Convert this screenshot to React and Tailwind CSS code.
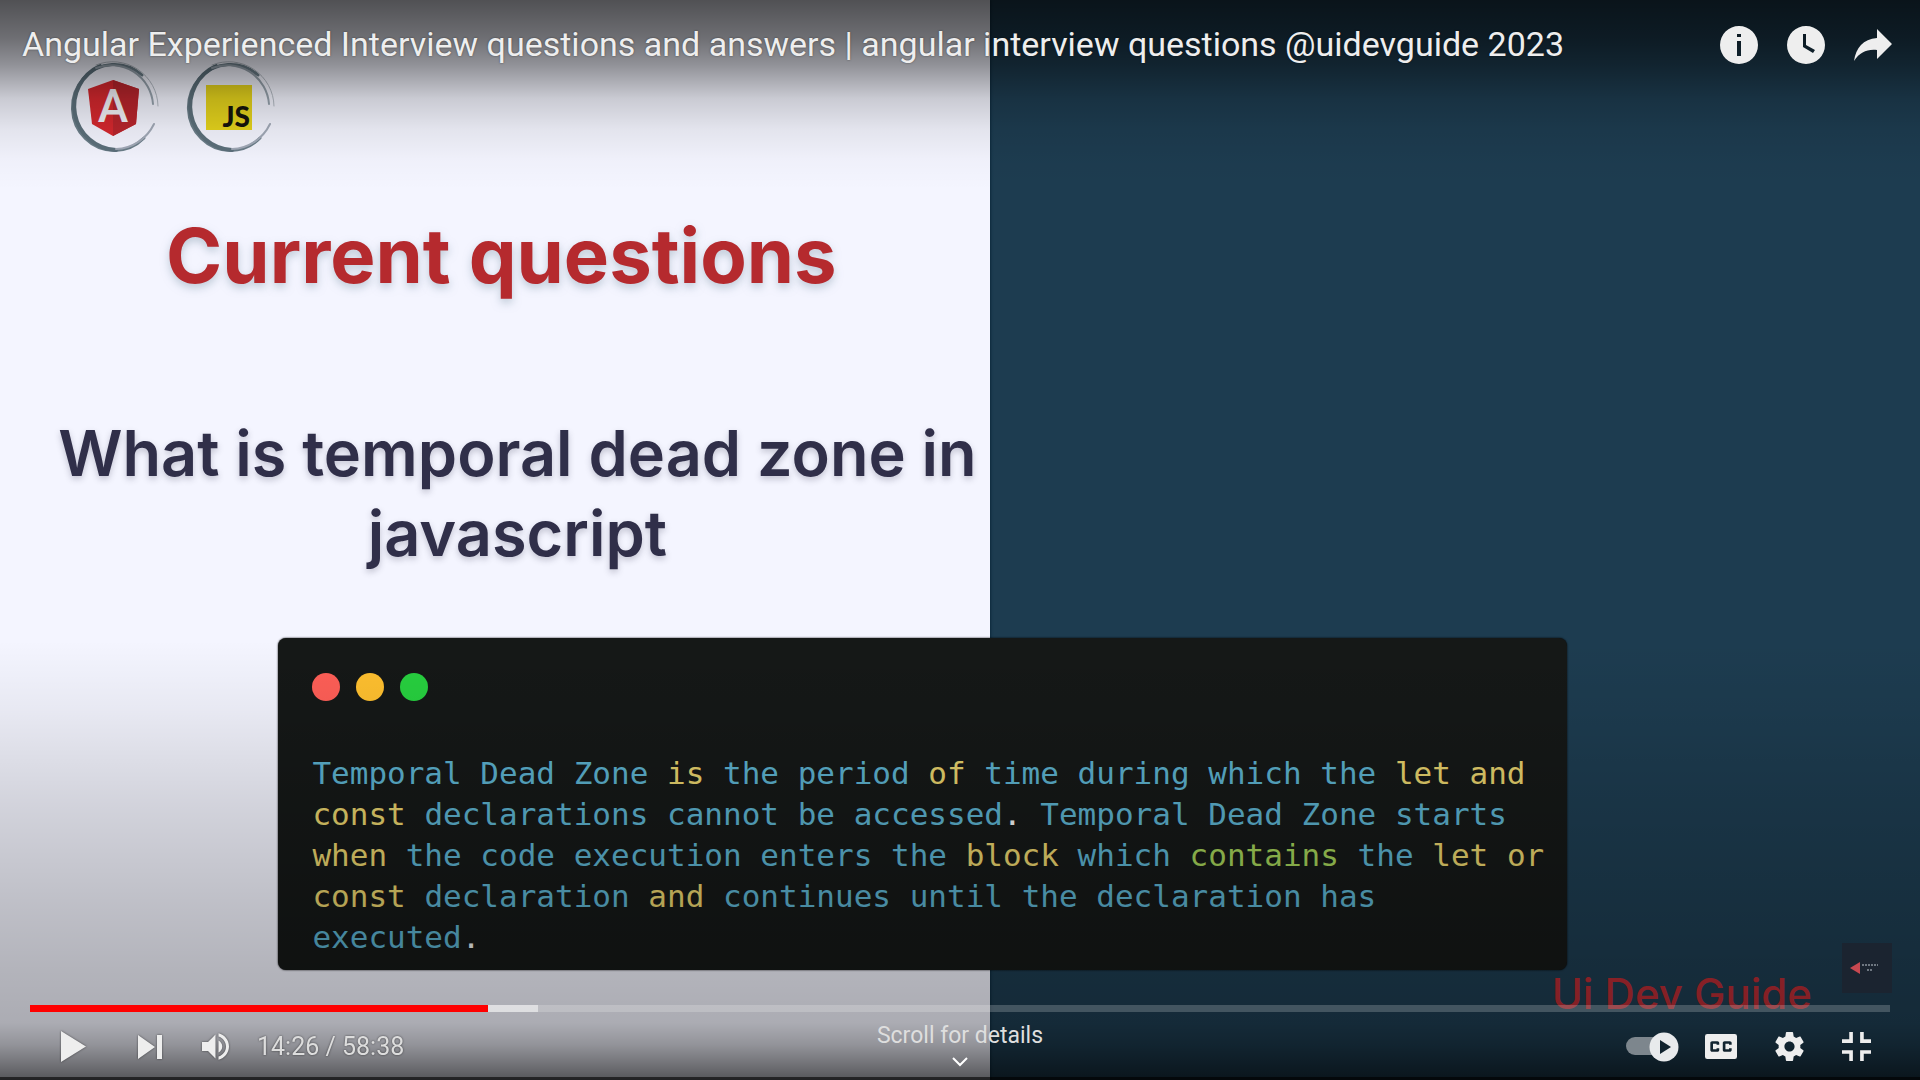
const Play = () => (<svg viewBox="0 0 25 31" className="h-[31px] w-[25px]" fill="currentColor"><path d="M0 0 25 15.500 0 31z" /></svg>);
const Next = () => (<svg viewBox="0 0 24 24" className="size-6" fill="currentColor"><path d="M0 0 17 12 0 24zM19 0h5v24h-5z" /></svg>);
const Volume = () => (<svg viewBox="8 9 18 18" className="size-[27px]" fill="currentColor"><path d="M8,21 L12,21 L17,26 L17,10 L12,15 L8,15 L8,21 Z M19,14 L19,22 C20.48,21.32 21.5,19.77 21.5,18 C21.5,16.26 20.48,14.74 19,14 Z M19,11.29 C21.89,12.15 24,14.83 24,18 C24,21.17 21.89,23.85 19,24.71 L19,26.77 C23.01,25.86 26,22.28 26,18 C26,13.72 23.01,10.14 19,9.23 L19,11.29 Z" /></svg>);
const Captions = () => (<svg viewBox="0 0 18 14" className="h-[25px] w-8" fill="currentColor" fillRule="evenodd"><path d="M1.300 0h15.400A1.300 1.300 0 0 1 18 1.300v11.400a1.300 1.300 0 0 1-1.300 1.300H1.300A1.300 1.300 0 0 1 0 12.700V1.300A1.300 1.300 0 0 1 1.300 0zM8 6H6.500v-.5h-2v3h2V8H8v1c0 .55-.45 1-1 1H4c-.55 0-1-.45-1-1V5c0-.55.45-1 1-1h3c.55 0 1 .45 1 1zm7 0h-1.500v-.5h-2v3h2V8H15v1c0 .55-.45 1-1 1h-3c-.55 0-1-.45-1-1V5c0-.55.45-1 1-1h3c.55 0 1 .45 1 1z" /></svg>);
const Gear = () => (<svg viewBox="10 10 16 16" className="size-[29px]" fill="currentColor"><path d="m 23.94,18.78 c .03,-0.25 .05,-0.51 .05,-0.78 0,-0.27 -0.02,-0.52 -0.05,-0.78 l 1.68,-1.32 c .15,-0.12 .19,-0.33 .09,-0.51 l -1.6,-2.76 c -0.09,-0.17 -0.31,-0.24 -0.48,-0.17 l -1.99,.8 c -0.41,-0.32 -0.86,-0.58 -1.35,-0.78 l -0.30,-2.12 c -0.02,-0.19 -0.19,-0.33 -0.39,-0.33 l -3.2,0 c -0.2,0 -0.36,.14 -0.39,.33 l -0.30,2.12 c -0.48,.2 -0.93,.47 -1.35,.78 l -1.99,-0.8 c -0.18,-0.07 -0.39,0 -0.48,.17 l -1.6,2.76 c -0.10,.17 -0.05,.39 .09,.51 l 1.68,1.32 c -0.03,.25 -0.05,.52 -0.05,.78 0,.26 .02,.52 .05,.78 l -1.68,1.32 c -0.15,.12 -0.19,.33 -0.09,.51 l 1.6,2.76 c .09,.17 .31,.24 .48,.17 l 1.99,-0.8 c .41,.32 .86,.58 1.35,.78 l .30,2.12 c .02,.19 .19,.33 .39,.33 l 3.2,0 c .2,0 .36,-0.14 .39,-0.33 l .30,-2.12 c .48,-0.2 .93,-0.47 1.35,-0.78 l 1.99,.8 c .18,.07 .39,0 .48,-0.17 l 1.6,-2.76 c .09,-0.17 .05,-0.39 -0.09,-0.51 l -1.68,-1.32 0,0 z m -5.94,2.01 c -1.54,0 -2.8,-1.25 -2.8,-2.8 0,-1.54 1.25,-2.8 2.8,-2.8 1.54,0 2.8,1.25 2.8,2.8 0,1.54 -1.25,2.8 -2.8,2.8 l 0,0 z" /></svg>);
const ExitFull = () => (<svg viewBox="0 0 16 16" className="size-[29px]" fill="currentColor"><path d="M4 0h2v6H0V4h4zM10 0h2v4h4v2h-6zM0 10h6v6H4v-4H0zM10 10h6v2h-4v4h-2z" /></svg>);
const Info = () => (<svg viewBox="0 0 38 38" className="size-[38px]" fill="currentColor" fillRule="evenodd"><path d="M19 0a19 19 0 1 0 0 38 19 19 0 0 0 0-38zM17 8h4v3h-4zM17 15h4v15h-4z" /></svg>);
const Clock = () => (<svg viewBox="0 0 38 38" className="size-[38px]" fill="currentColor" fillRule="evenodd"><path d="M19 0a19 19 0 1 0 0 38 19 19 0 0 0 0-38zM16 8h3v11l9 5-2 3-10-6z" /></svg>);
const Share = () => (<svg viewBox="0 0 38 32" className="h-8 w-[38px]" fill="currentColor"><path d="M23 0 38 15 23 30V21C13 20 6 23 0 32 2 19 9 10 23 9z" /></svg>);

function Ring() {
  return (
    <g fill="none" strokeLinecap="round">
      <path d="M76 17A42 43 0 1 0 78 80" stroke="#6b7e89" strokeWidth="3" />
      <path d="M34 8A44 44 0 0 0 50 92" stroke="#5c707b" strokeWidth="4" />
      <path d="M30 7A45 45 0 0 1 92 48" stroke="#b4bbc4" strokeWidth="1" />
      <path d="M30 10A42 42 0 0 1 87 46" stroke="#97a3ae" strokeWidth="2" />
      <path d="M88 66A44 44 0 0 1 50 91" stroke="#a2aab8" strokeWidth="2" />
    </g>
  );
}
const AngularBadge = () => (
  <svg viewBox="0 0 96 96" className="size-24" role="img" aria-label="Angular">
    <Ring />
    <path d="M47 22 73 31 70 66 47 78 26 66 22 31z" fill="#d6282e" />
    <path d="M47 22 73 31 70 66 47 78z" fill="#b9252c" />
    <text x="47" y="64" textAnchor="middle" className="text-[46px] font-medium" fill="#f2f2f7">A</text>
  </svg>
);
const JsBadge = () => (
  <svg viewBox="0 0 96 96" className="size-24" role="img" aria-label="JavaScript">
    <Ring />
    <path d="M24 27h46v45H24z" fill="#e6d41c" />
    <text x="68" y="69" textAnchor="end" className="font-[Lato,sans-serif] text-[28px] font-black" fill="#15140c">JS</text>
  </svg>
);

const K = ({ children }) => <span className="text-[#e6d16c]">{children}</span>;
const P = () => <span className="text-[#f0f2f2]">.</span>;

export default function App() {
  return (
    <main className="relative grid min-h-screen grid-cols-[33fr_31fr] overflow-hidden bg-[#1d3c50] font-[Roboto,sans-serif]">
      <div className="bg-[#f4f5ff] shadow-[1px_0_2px_#0d2a3c]" />
      <div />

      <section className="absolute inset-0 flex flex-col">
        <div className="flex gap-5 pt-[58px] pl-[66px]">
          <AngularBadge />
          <JsBadge />
        </div>
        <div className="flex w-[51.6%] flex-col items-center pl-7 text-center whitespace-nowrap">
          <h1 className="mt-[53px] mr-4 font-[Inter,sans-serif] text-[76px] leading-[96px] font-bold text-[#b52a2e] [text-shadow:0_4px_8px_#8aa0b080]">Current questions</h1>
          <p className="mt-[110px] ml-4 font-[Inter,sans-serif] text-[63px] leading-20 font-semibold text-[#302f49] [text-shadow:0_3px_6px_#302f4940]">What is temporal dead zone in<br />javascript</p>
        </div>
        <div className="mt-[65px] mr-[18.4%] ml-[14.5%] rounded-lg bg-[#151817] px-[34px] pt-[35px] pb-3 shadow-[0_0_2px_#000]">
          <div className="flex gap-4">
            <span className="size-7 rounded-full bg-[#ff5f57]" />
            <span className="size-7 rounded-full bg-[#ffc02f]" />
            <span className="size-7 rounded-full bg-[#27d03f]" />
          </div>
          <p className="mt-[52px] font-['DejaVu_Sans_Mono',monospace] text-[31px] leading-[41px] whitespace-nowrap text-[#5cb1ce]">
            Temporal Dead Zone <K>is</K> the period <K>of</K> time during which the <K>let and</K><br />
            <K>const</K> declarations cannot be accessed<P /> Temporal Dead Zone starts<br />
            <K>when</K> the code execution enters the <K>block</K> which <span className="text-[#a2cf58]">contains</span> the <K>let or</K><br />
            <K>const</K> declaration <K>and</K> continues until the declaration has<br />
            executed<P />
          </p>
        </div>
        <p className="mr-[108px] self-end font-[Inter,sans-serif] text-[42px] leading-12 font-medium text-[#b92c34]">Ui Dev Guide</p>
      </section>

      <div className="absolute inset-x-0 top-0 h-[190px] bg-[linear-gradient(to_bottom,#000000ab_0%,#0000008c_20%,#00000068_34%,#0000002c_52%,#00000012_68%,#00000005_84%,#00000000_100%)]" />
      <div className="absolute inset-x-0 bottom-0 h-[440px] bg-[linear-gradient(to_bottom,#00000000_0%,#0000000d_16%,#00000024_38%,#00000038_60%,#00000044_75%,#0000004c_87%,#00000066_92%,#00000085_96%,#000000a6_100%)]" />

      <section className="absolute inset-0 flex flex-col justify-between text-[#eee]">
        <header className="flex items-start justify-between pt-6 pr-7 pl-[22px]">
          <h2 className="text-[34px] leading-10 [text-shadow:0_0_2px_#00000080]">Angular Experienced Interview questions and answers | angular interview questions @uidevguide 2023</h2>
          <div className="flex h-[42px] items-center gap-[29px]">
            <button aria-label="Info"><Info /></button>
            <button aria-label="Watch later"><Clock /></button>
            <button aria-label="Share"><Share /></button>
          </div>
        </header>
        <footer className="flex flex-col">
          <div className="mr-7 mb-3 flex size-[50px] items-center gap-0.5 self-end bg-[#1b2430] pl-2">
            <svg viewBox="0 0 10 12" className="h-3 w-2.5"><path d="M0 6 10 0v12z" fill="#c84850" /></svg>
            <svg viewBox="0 0 16 8" className="h-2 w-4" stroke="#8a929c" strokeWidth="1.500" strokeDasharray="2 1"><path d="M0 1h16M5 6h6" /></svg>
          </div>
          <div role="progressbar" aria-label="Playback position" aria-valuenow={25} className="mx-[30px] flex h-[7px] bg-white/20">
            <div className="w-[24.6%] bg-[#f00]" /><div className="w-[2.7%] bg-white/50" />
          </div>
          <div className="grid h-[65px] grid-cols-[1fr_auto_1fr]">
            <div className="flex items-center pt-1 pl-[61px] drop-shadow-[0_0_1px_#0008]">
              <button aria-label="Play"><Play /></button>
              <button aria-label="Next" className="ml-[52px]"><Next /></button>
              <button aria-label="Mute" className="ml-10"><Volume /></button>
              <span className="ml-7 text-[25px] leading-8 text-[#ddd]">14:26 / 58:38</span>
            </div>
            <button className="flex flex-col items-center pt-2 text-[23px] leading-8 text-[#dedede]">Scroll for details
              <svg viewBox="0 0 16 10" className="mt-[5px] h-2.5 w-4" fill="none" stroke="#fff" strokeWidth="2"><path d="m1 1 7 7 7-7" /></svg>
            </button>
            <div className="flex items-center justify-end gap-[38px] pt-1 pr-[49px]">
              <button role="switch" aria-checked="true" aria-label="Autoplay" className="-mr-3">
                <svg viewBox="0 0 53 30" className="h-[30px] w-[53px]"><rect y="5" width="48" height="18" rx="9" fill="#7d868d" /><circle cx="38" cy="15" r="14.500" fill="#e8eaec" /><path d="m34 8 11 7-11 7z" fill="#10222e" /></svg>
              </button>
              <button aria-label="Subtitles"><Captions /></button>
              <button aria-label="Settings"><Gear /></button>
              <button aria-label="Exit full screen"><ExitFull /></button>
            </div>
          </div>
          <div className="h-[3px] bg-black/60" />
        </footer>
      </section>
    </main>
  );
}
